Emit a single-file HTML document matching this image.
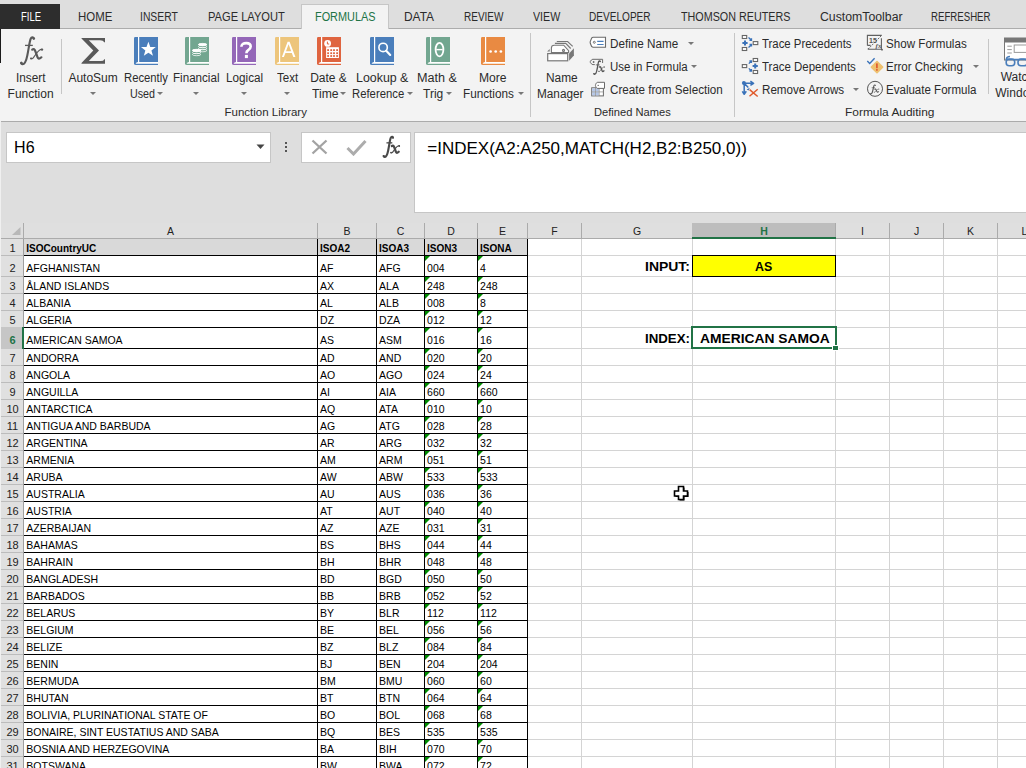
<!DOCTYPE html>
<html><head><meta charset="utf-8"><style>
html,body{margin:0;padding:0;}
body{width:1026px;height:768px;overflow:hidden;position:relative;background:#fff;font-family:'Liberation Sans', sans-serif;}
body > div{position:absolute;}
.t{white-space:pre;transform-origin:0 0;}
</style></head><body>
<div style="left:0px;top:0px;width:1026px;height:28px;background:#dedede;"></div>
<div style="left:0px;top:28px;width:1026px;height:1px;background:#acacac;"></div>
<div style="left:0px;top:29px;width:1026px;height:92px;background:#f3f3f3;"></div>
<div style="left:0px;top:121px;width:1026px;height:1px;background:#ababab;"></div>
<div style="left:0px;top:4px;width:1px;height:59px;background:#1a1a1a;"></div>
<div style="left:0px;top:4px;width:60px;height:25px;background:#2d2d2d;"></div>
<div style="left:301px;top:4px;width:88px;height:25px;background:#f3f3f3;box-sizing:border-box;border:1px solid #c6c6c6;border-bottom:none;"></div>
<div class="t" style="left:20.50px;top:10.64px;font:normal 12px 'Liberation Sans', sans-serif;line-height:12px;color:#ffffff;transform:scaleX(0.7931);">FILE</div>
<div class="t" style="left:77.50px;top:10.64px;font:normal 12px 'Liberation Sans', sans-serif;line-height:12px;color:#2b2b2b;transform:scaleX(0.9528);">HOME</div>
<div class="t" style="left:140.40px;top:10.64px;font:normal 12px 'Liberation Sans', sans-serif;line-height:12px;color:#2b2b2b;transform:scaleX(0.8631);">INSERT</div>
<div class="t" style="left:207.80px;top:10.64px;font:normal 12px 'Liberation Sans', sans-serif;line-height:12px;color:#2b2b2b;transform:scaleX(0.9262);">PAGE LAYOUT</div>
<div class="t" style="left:314.50px;top:10.64px;font:normal 12px 'Liberation Sans', sans-serif;line-height:12px;color:#217346;transform:scaleX(0.9072);">FORMULAS</div>
<div class="t" style="left:404.40px;top:10.64px;font:normal 12px 'Liberation Sans', sans-serif;line-height:12px;color:#2b2b2b;transform:scaleX(0.9922);">DATA</div>
<div class="t" style="left:464.10px;top:10.64px;font:normal 12px 'Liberation Sans', sans-serif;line-height:12px;color:#2b2b2b;transform:scaleX(0.8343);">REVIEW</div>
<div class="t" style="left:532.80px;top:10.64px;font:normal 12px 'Liberation Sans', sans-serif;line-height:12px;color:#2b2b2b;transform:scaleX(0.8901);">VIEW</div>
<div class="t" style="left:589.40px;top:10.64px;font:normal 12px 'Liberation Sans', sans-serif;line-height:12px;color:#2b2b2b;transform:scaleX(0.8397);">DEVELOPER</div>
<div class="t" style="left:680.60px;top:10.64px;font:normal 12px 'Liberation Sans', sans-serif;line-height:12px;color:#2b2b2b;transform:scaleX(0.8966);">THOMSON REUTERS</div>
<div class="t" style="left:819.60px;top:10.64px;font:normal 12px 'Liberation Sans', sans-serif;line-height:12px;color:#2b2b2b;transform:scaleX(1.0235);">CustomToolbar</div>
<div class="t" style="left:931.20px;top:10.64px;font:normal 12px 'Liberation Sans', sans-serif;line-height:12px;color:#2b2b2b;transform:scaleX(0.8039);">REFRESHER</div>
<div class="t" style="left:15.80px;top:71.84px;font:normal 12px 'Liberation Sans', sans-serif;line-height:12px;color:#2b2b2b;transform:scaleX(0.9828);">Insert</div>
<div class="t" style="left:7.60px;top:87.74px;font:normal 12px 'Liberation Sans', sans-serif;line-height:12px;color:#2b2b2b;">Function</div>
<div class="t" style="left:68.40px;top:71.84px;font:normal 12px 'Liberation Sans', sans-serif;line-height:12px;color:#2b2b2b;">AutoSum</div>
<div class="t" style="left:123.70px;top:71.84px;font:normal 12px 'Liberation Sans', sans-serif;line-height:12px;color:#2b2b2b;transform:scaleX(0.9403);">Recently</div>
<div class="t" style="left:129.50px;top:87.74px;font:normal 12px 'Liberation Sans', sans-serif;line-height:12px;color:#2b2b2b;transform:scaleX(0.8924);">Used</div>
<div class="t" style="left:173.20px;top:71.84px;font:normal 12px 'Liberation Sans', sans-serif;line-height:12px;color:#2b2b2b;transform:scaleX(0.9681);">Financial</div>
<div class="t" style="left:225.50px;top:71.84px;font:normal 12px 'Liberation Sans', sans-serif;line-height:12px;color:#2b2b2b;transform:scaleX(0.9755);">Logical</div>
<div class="t" style="left:276.60px;top:71.84px;font:normal 12px 'Liberation Sans', sans-serif;line-height:12px;color:#2b2b2b;transform:scaleX(0.9630);">Text</div>
<div class="t" style="left:310.20px;top:71.84px;font:normal 12px 'Liberation Sans', sans-serif;line-height:12px;color:#2b2b2b;">Date &amp;</div>
<div class="t" style="left:311.50px;top:87.74px;font:normal 12px 'Liberation Sans', sans-serif;line-height:12px;color:#2b2b2b;transform:scaleX(1.0139);">Time</div>
<div class="t" style="left:355.90px;top:71.84px;font:normal 12px 'Liberation Sans', sans-serif;line-height:12px;color:#2b2b2b;transform:scaleX(1.0331);">Lookup &amp;</div>
<div class="t" style="left:352.30px;top:87.74px;font:normal 12px 'Liberation Sans', sans-serif;line-height:12px;color:#2b2b2b;transform:scaleX(0.9427);">Reference</div>
<div class="t" style="left:417.40px;top:71.84px;font:normal 12px 'Liberation Sans', sans-serif;line-height:12px;color:#2b2b2b;transform:scaleX(1.0522);">Math &amp;</div>
<div class="t" style="left:423.00px;top:87.74px;font:normal 12px 'Liberation Sans', sans-serif;line-height:12px;color:#2b2b2b;">Trig</div>
<div class="t" style="left:479.40px;top:71.84px;font:normal 12px 'Liberation Sans', sans-serif;line-height:12px;color:#2b2b2b;transform:scaleX(1.0094);">More</div>
<div class="t" style="left:463.30px;top:87.74px;font:normal 12px 'Liberation Sans', sans-serif;line-height:12px;color:#2b2b2b;transform:scaleX(0.9783);">Functions</div>
<div class="t" style="left:545.60px;top:71.84px;font:normal 12px 'Liberation Sans', sans-serif;line-height:12px;color:#2b2b2b;transform:scaleX(0.9901);">Name</div>
<div class="t" style="left:537.40px;top:87.74px;font:normal 12px 'Liberation Sans', sans-serif;line-height:12px;color:#2b2b2b;transform:scaleX(0.9815);">Manager</div>
<div class="t" style="left:1000.70px;top:70.84px;font:normal 12px 'Liberation Sans', sans-serif;line-height:12px;color:#2b2b2b;">Watch</div>
<div class="t" style="left:995.30px;top:86.84px;font:normal 12px 'Liberation Sans', sans-serif;line-height:12px;color:#2b2b2b;">Window</div>
<div class="t" style="left:609.60px;top:37.64px;font:normal 12px 'Liberation Sans', sans-serif;line-height:12px;color:#2b2b2b;transform:scaleX(0.9739);">Define Name</div>
<div class="t" style="left:609.60px;top:60.54px;font:normal 12px 'Liberation Sans', sans-serif;line-height:12px;color:#2b2b2b;transform:scaleX(0.9550);">Use in Formula</div>
<div class="t" style="left:609.60px;top:83.54px;font:normal 12px 'Liberation Sans', sans-serif;line-height:12px;color:#2b2b2b;transform:scaleX(0.9719);">Create from Selection</div>
<div class="t" style="left:761.70px;top:37.64px;font:normal 12px 'Liberation Sans', sans-serif;line-height:12px;color:#2b2b2b;transform:scaleX(0.9494);">Trace Precedents</div>
<div class="t" style="left:761.70px;top:60.54px;font:normal 12px 'Liberation Sans', sans-serif;line-height:12px;color:#2b2b2b;transform:scaleX(0.9544);">Trace Dependents</div>
<div class="t" style="left:761.70px;top:83.54px;font:normal 12px 'Liberation Sans', sans-serif;line-height:12px;color:#2b2b2b;transform:scaleX(0.9693);">Remove Arrows</div>
<div class="t" style="left:886.30px;top:37.64px;font:normal 12px 'Liberation Sans', sans-serif;line-height:12px;color:#2b2b2b;transform:scaleX(0.9679);">Show Formulas</div>
<div class="t" style="left:886.30px;top:60.54px;font:normal 12px 'Liberation Sans', sans-serif;line-height:12px;color:#2b2b2b;transform:scaleX(0.9596);">Error Checking</div>
<div class="t" style="left:886.30px;top:83.54px;font:normal 12px 'Liberation Sans', sans-serif;line-height:12px;color:#2b2b2b;transform:scaleX(0.9612);">Evaluate Formula</div>
<div class="t" style="left:224.50px;top:107.17px;font:normal 11.5px 'Liberation Sans', sans-serif;line-height:11.5px;color:#2b2b2b;">Function Library</div>
<div class="t" style="left:593.70px;top:107.17px;font:normal 11.5px 'Liberation Sans', sans-serif;line-height:11.5px;color:#2b2b2b;transform:scaleX(0.9676);">Defined Names</div>
<div class="t" style="left:845.20px;top:107.17px;font:normal 11.5px 'Liberation Sans', sans-serif;line-height:11.5px;color:#2b2b2b;transform:scaleX(1.0371);">Formula Auditing</div>
<div style="left:61px;top:39px;width:1px;height:55px;background:#c6c6c6;"></div>
<div style="left:530px;top:33px;width:1px;height:84px;background:#c6c6c6;"></div>
<div style="left:734px;top:33px;width:1px;height:84px;background:#c6c6c6;"></div>
<div style="left:988px;top:39px;width:1px;height:55px;background:#c6c6c6;"></div>
<svg style="position:absolute;left:90.4px;top:92px;" width="6" height="4" viewBox="0 0 6 4"><path d="M0 0 L6 0 L3 3 Z" fill="#777"/></svg>
<svg style="position:absolute;left:193px;top:92px;" width="6" height="4" viewBox="0 0 6 4"><path d="M0 0 L6 0 L3 3 Z" fill="#777"/></svg>
<svg style="position:absolute;left:241.2px;top:92px;" width="6" height="4" viewBox="0 0 6 4"><path d="M0 0 L6 0 L3 3 Z" fill="#777"/></svg>
<svg style="position:absolute;left:284px;top:92px;" width="6" height="4" viewBox="0 0 6 4"><path d="M0 0 L6 0 L3 3 Z" fill="#777"/></svg>
<svg style="position:absolute;left:157px;top:92px;" width="6" height="4" viewBox="0 0 6 4"><path d="M0 0 L6 0 L3 3 Z" fill="#777"/></svg>
<svg style="position:absolute;left:340px;top:92px;" width="6" height="4" viewBox="0 0 6 4"><path d="M0 0 L6 0 L3 3 Z" fill="#777"/></svg>
<svg style="position:absolute;left:406.6px;top:92px;" width="6" height="4" viewBox="0 0 6 4"><path d="M0 0 L6 0 L3 3 Z" fill="#777"/></svg>
<svg style="position:absolute;left:446.1px;top:92px;" width="6" height="4" viewBox="0 0 6 4"><path d="M0 0 L6 0 L3 3 Z" fill="#777"/></svg>
<svg style="position:absolute;left:517.7px;top:92px;" width="6" height="4" viewBox="0 0 6 4"><path d="M0 0 L6 0 L3 3 Z" fill="#777"/></svg>
<svg style="position:absolute;left:687.5px;top:42px;" width="6" height="4" viewBox="0 0 6 4"><path d="M0 0 L6 0 L3 3 Z" fill="#777"/></svg>
<svg style="position:absolute;left:690.5px;top:65px;" width="6" height="4" viewBox="0 0 6 4"><path d="M0 0 L6 0 L3 3 Z" fill="#777"/></svg>
<svg style="position:absolute;left:853.4px;top:88px;" width="6" height="4" viewBox="0 0 6 4"><path d="M0 0 L6 0 L3 3 Z" fill="#777"/></svg>
<svg style="position:absolute;left:973.3px;top:65px;" width="6" height="4" viewBox="0 0 6 4"><path d="M0 0 L6 0 L3 3 Z" fill="#777"/></svg>
<div style="left:0px;top:122px;width:1026px;height:101px;background:#dedede;"></div>
<div style="left:0px;top:121px;width:1px;height:647px;background:#f0f0f0;"></div>
<div style="left:6px;top:132px;width:265px;height:31px;background:#ffffff;box-sizing:border-box;border:1px solid #c6c6c6;"></div>
<div style="left:301px;top:132px;width:110px;height:31px;background:#ffffff;box-sizing:border-box;border:1px solid #c6c6c6;"></div>
<div style="left:414px;top:132px;width:612px;height:81px;background:#ffffff;box-sizing:border-box;border:1px solid #c6c6c6;border-right:none;"></div>
<div class="t" style="left:14.10px;top:140.46px;font:normal 16px 'Liberation Sans', sans-serif;line-height:16px;color:#000;">H6</div>
<div class="t" style="left:427.30px;top:139.61px;font:normal 17px 'Liberation Sans', sans-serif;line-height:17px;color:#000;">=INDEX(A2:A250,MATCH(H2,B2:B250,0))</div>
<svg style="position:absolute;left:256px;top:144px;" width="9" height="6" viewBox="0 0 9 6"><path d="M0.5 0.5 L8.5 0.5 L4.5 5 Z" fill="#444"/></svg>
<div style="left:285px;top:142px;width:2px;height:2px;background:#555;"></div>
<div style="left:285px;top:146px;width:2px;height:2px;background:#555;"></div>
<div style="left:285px;top:150px;width:2px;height:2px;background:#555;"></div>
<div style="left:1px;top:223px;width:1025px;height:15px;background:#dfdfdf;"></div>
<div style="left:1px;top:238px;width:1025px;height:1px;background:#ababab;"></div>
<div style="left:23px;top:223px;width:1px;height:15px;background:#ababab;"></div>
<div style="left:317px;top:223px;width:1px;height:15px;background:#ababab;"></div>
<div style="left:376px;top:223px;width:1px;height:15px;background:#ababab;"></div>
<div style="left:424px;top:223px;width:1px;height:15px;background:#ababab;"></div>
<div style="left:477px;top:223px;width:1px;height:15px;background:#ababab;"></div>
<div style="left:527px;top:223px;width:1px;height:15px;background:#ababab;"></div>
<div style="left:581px;top:223px;width:1px;height:15px;background:#ababab;"></div>
<div style="left:692px;top:223px;width:1px;height:15px;background:#ababab;"></div>
<div style="left:835px;top:223px;width:1px;height:15px;background:#ababab;"></div>
<div style="left:889px;top:223px;width:1px;height:15px;background:#ababab;"></div>
<div style="left:943px;top:223px;width:1px;height:15px;background:#ababab;"></div>
<div style="left:997px;top:223px;width:1px;height:15px;background:#ababab;"></div>
<div style="left:692px;top:223px;width:143px;height:14px;background:#bdbdbd;"></div>
<div style="left:692px;top:237px;width:144px;height:2px;background:#217346;"></div>
<svg style="position:absolute;left:12px;top:227px;" width="9" height="8" viewBox="0 0 9 8"><path d="M8.5 0 L8.5 8 L0 8 Z" fill="#b8b8b8"/></svg>
<div style="left:1px;top:239px;width:22px;height:529px;background:#e0e0e0;"></div>
<div style="left:23px;top:239px;width:1px;height:529px;background:#9f9f9f;"></div>
<div style="left:24px;top:239px;width:503px;height:16px;background:#d9d9d9;"></div>
<div style="left:692px;top:255px;width:144px;height:22px;background:#ffff00;box-sizing:border-box;border:1px solid #000;"></div>
<div style="left:527px;top:239px;width:1px;height:529px;background:#d4d4d4;"></div>
<div style="left:581px;top:239px;width:1px;height:529px;background:#d4d4d4;"></div>
<div style="left:692px;top:239px;width:1px;height:529px;background:#d4d4d4;"></div>
<div style="left:835px;top:239px;width:1px;height:529px;background:#d4d4d4;"></div>
<div style="left:889px;top:239px;width:1px;height:529px;background:#d4d4d4;"></div>
<div style="left:943px;top:239px;width:1px;height:529px;background:#d4d4d4;"></div>
<div style="left:997px;top:239px;width:1px;height:529px;background:#d4d4d4;"></div>
<div style="left:528px;top:255px;width:498px;height:1px;background:#d4d4d4;"></div>
<div style="left:1px;top:255px;width:22px;height:1px;background:#bcbcbc;"></div>
<div style="left:528px;top:276px;width:498px;height:1px;background:#d4d4d4;"></div>
<div style="left:1px;top:276px;width:22px;height:1px;background:#bcbcbc;"></div>
<div style="left:528px;top:293px;width:498px;height:1px;background:#d4d4d4;"></div>
<div style="left:1px;top:293px;width:22px;height:1px;background:#bcbcbc;"></div>
<div style="left:528px;top:310px;width:498px;height:1px;background:#d4d4d4;"></div>
<div style="left:1px;top:310px;width:22px;height:1px;background:#bcbcbc;"></div>
<div style="left:528px;top:327px;width:498px;height:1px;background:#d4d4d4;"></div>
<div style="left:1px;top:327px;width:22px;height:1px;background:#bcbcbc;"></div>
<div style="left:528px;top:348px;width:498px;height:1px;background:#d4d4d4;"></div>
<div style="left:1px;top:348px;width:22px;height:1px;background:#bcbcbc;"></div>
<div style="left:528px;top:365px;width:498px;height:1px;background:#d4d4d4;"></div>
<div style="left:1px;top:365px;width:22px;height:1px;background:#bcbcbc;"></div>
<div style="left:528px;top:382px;width:498px;height:1px;background:#d4d4d4;"></div>
<div style="left:1px;top:382px;width:22px;height:1px;background:#bcbcbc;"></div>
<div style="left:528px;top:399px;width:498px;height:1px;background:#d4d4d4;"></div>
<div style="left:1px;top:399px;width:22px;height:1px;background:#bcbcbc;"></div>
<div style="left:528px;top:416px;width:498px;height:1px;background:#d4d4d4;"></div>
<div style="left:1px;top:416px;width:22px;height:1px;background:#bcbcbc;"></div>
<div style="left:528px;top:433px;width:498px;height:1px;background:#d4d4d4;"></div>
<div style="left:1px;top:433px;width:22px;height:1px;background:#bcbcbc;"></div>
<div style="left:528px;top:450px;width:498px;height:1px;background:#d4d4d4;"></div>
<div style="left:1px;top:450px;width:22px;height:1px;background:#bcbcbc;"></div>
<div style="left:528px;top:467px;width:498px;height:1px;background:#d4d4d4;"></div>
<div style="left:1px;top:467px;width:22px;height:1px;background:#bcbcbc;"></div>
<div style="left:528px;top:484px;width:498px;height:1px;background:#d4d4d4;"></div>
<div style="left:1px;top:484px;width:22px;height:1px;background:#bcbcbc;"></div>
<div style="left:528px;top:501px;width:498px;height:1px;background:#d4d4d4;"></div>
<div style="left:1px;top:501px;width:22px;height:1px;background:#bcbcbc;"></div>
<div style="left:528px;top:518px;width:498px;height:1px;background:#d4d4d4;"></div>
<div style="left:1px;top:518px;width:22px;height:1px;background:#bcbcbc;"></div>
<div style="left:528px;top:535px;width:498px;height:1px;background:#d4d4d4;"></div>
<div style="left:1px;top:535px;width:22px;height:1px;background:#bcbcbc;"></div>
<div style="left:528px;top:552px;width:498px;height:1px;background:#d4d4d4;"></div>
<div style="left:1px;top:552px;width:22px;height:1px;background:#bcbcbc;"></div>
<div style="left:528px;top:569px;width:498px;height:1px;background:#d4d4d4;"></div>
<div style="left:1px;top:569px;width:22px;height:1px;background:#bcbcbc;"></div>
<div style="left:528px;top:586px;width:498px;height:1px;background:#d4d4d4;"></div>
<div style="left:1px;top:586px;width:22px;height:1px;background:#bcbcbc;"></div>
<div style="left:528px;top:603px;width:498px;height:1px;background:#d4d4d4;"></div>
<div style="left:1px;top:603px;width:22px;height:1px;background:#bcbcbc;"></div>
<div style="left:528px;top:620px;width:498px;height:1px;background:#d4d4d4;"></div>
<div style="left:1px;top:620px;width:22px;height:1px;background:#bcbcbc;"></div>
<div style="left:528px;top:637px;width:498px;height:1px;background:#d4d4d4;"></div>
<div style="left:1px;top:637px;width:22px;height:1px;background:#bcbcbc;"></div>
<div style="left:528px;top:654px;width:498px;height:1px;background:#d4d4d4;"></div>
<div style="left:1px;top:654px;width:22px;height:1px;background:#bcbcbc;"></div>
<div style="left:528px;top:671px;width:498px;height:1px;background:#d4d4d4;"></div>
<div style="left:1px;top:671px;width:22px;height:1px;background:#bcbcbc;"></div>
<div style="left:528px;top:688px;width:498px;height:1px;background:#d4d4d4;"></div>
<div style="left:1px;top:688px;width:22px;height:1px;background:#bcbcbc;"></div>
<div style="left:528px;top:705px;width:498px;height:1px;background:#d4d4d4;"></div>
<div style="left:1px;top:705px;width:22px;height:1px;background:#bcbcbc;"></div>
<div style="left:528px;top:722px;width:498px;height:1px;background:#d4d4d4;"></div>
<div style="left:1px;top:722px;width:22px;height:1px;background:#bcbcbc;"></div>
<div style="left:528px;top:739px;width:498px;height:1px;background:#d4d4d4;"></div>
<div style="left:1px;top:739px;width:22px;height:1px;background:#bcbcbc;"></div>
<div style="left:528px;top:756px;width:498px;height:1px;background:#d4d4d4;"></div>
<div style="left:1px;top:756px;width:22px;height:1px;background:#bcbcbc;"></div>
<div style="left:528px;top:773px;width:498px;height:1px;background:#d4d4d4;"></div>
<div style="left:1px;top:773px;width:22px;height:1px;background:#bcbcbc;"></div>
<div style="left:1px;top:327px;width:21px;height:22px;background:#c6c6c6;"></div>
<div style="left:22px;top:327px;width:2px;height:22px;background:#217346;"></div>
<div style="left:317px;top:239px;width:1px;height:529px;background:#000;"></div>
<div style="left:376px;top:239px;width:1px;height:529px;background:#000;"></div>
<div style="left:424px;top:239px;width:1px;height:529px;background:#000;"></div>
<div style="left:477px;top:239px;width:1px;height:529px;background:#000;"></div>
<div style="left:527px;top:239px;width:1px;height:529px;background:#000;"></div>
<div style="left:24px;top:255px;width:504px;height:1px;background:#000;"></div>
<div style="left:24px;top:276px;width:504px;height:1px;background:#000;"></div>
<div style="left:24px;top:293px;width:504px;height:1px;background:#000;"></div>
<div style="left:24px;top:310px;width:504px;height:1px;background:#000;"></div>
<div style="left:24px;top:327px;width:504px;height:1px;background:#000;"></div>
<div style="left:24px;top:348px;width:504px;height:1px;background:#000;"></div>
<div style="left:24px;top:365px;width:504px;height:1px;background:#000;"></div>
<div style="left:24px;top:382px;width:504px;height:1px;background:#000;"></div>
<div style="left:24px;top:399px;width:504px;height:1px;background:#000;"></div>
<div style="left:24px;top:416px;width:504px;height:1px;background:#000;"></div>
<div style="left:24px;top:433px;width:504px;height:1px;background:#000;"></div>
<div style="left:24px;top:450px;width:504px;height:1px;background:#000;"></div>
<div style="left:24px;top:467px;width:504px;height:1px;background:#000;"></div>
<div style="left:24px;top:484px;width:504px;height:1px;background:#000;"></div>
<div style="left:24px;top:501px;width:504px;height:1px;background:#000;"></div>
<div style="left:24px;top:518px;width:504px;height:1px;background:#000;"></div>
<div style="left:24px;top:535px;width:504px;height:1px;background:#000;"></div>
<div style="left:24px;top:552px;width:504px;height:1px;background:#000;"></div>
<div style="left:24px;top:569px;width:504px;height:1px;background:#000;"></div>
<div style="left:24px;top:586px;width:504px;height:1px;background:#000;"></div>
<div style="left:24px;top:603px;width:504px;height:1px;background:#000;"></div>
<div style="left:24px;top:620px;width:504px;height:1px;background:#000;"></div>
<div style="left:24px;top:637px;width:504px;height:1px;background:#000;"></div>
<div style="left:24px;top:654px;width:504px;height:1px;background:#000;"></div>
<div style="left:24px;top:671px;width:504px;height:1px;background:#000;"></div>
<div style="left:24px;top:688px;width:504px;height:1px;background:#000;"></div>
<div style="left:24px;top:705px;width:504px;height:1px;background:#000;"></div>
<div style="left:24px;top:722px;width:504px;height:1px;background:#000;"></div>
<div style="left:24px;top:739px;width:504px;height:1px;background:#000;"></div>
<div style="left:24px;top:756px;width:504px;height:1px;background:#000;"></div>
<div style="left:24px;top:773px;width:504px;height:1px;background:#000;"></div>
<div style="left:692px;top:255px;width:144px;height:1px;background:#000;"></div>
<div style="left:692px;top:276px;width:144px;height:1px;background:#000;"></div>
<div style="left:692px;top:255px;width:1px;height:22px;background:#000;"></div>
<div style="left:835px;top:255px;width:1px;height:22px;background:#000;"></div>
<div class="t" style="left:9.44px;top:242.69px;font:normal 11px 'Liberation Sans', sans-serif;line-height:11px;color:#222;">1</div>
<div class="t" style="left:26.30px;top:243.53px;font:bold 10px 'Liberation Sans', sans-serif;line-height:10px;color:#000;">ISOCountryUC</div>
<div class="t" style="left:320.10px;top:243.53px;font:bold 10px 'Liberation Sans', sans-serif;line-height:10px;color:#000;">ISOA2</div>
<div class="t" style="left:379.10px;top:243.53px;font:bold 10px 'Liberation Sans', sans-serif;line-height:10px;color:#000;">ISOA3</div>
<div class="t" style="left:427.10px;top:243.53px;font:bold 10px 'Liberation Sans', sans-serif;line-height:10px;color:#000;">ISON3</div>
<div class="t" style="left:480.10px;top:243.53px;font:bold 10px 'Liberation Sans', sans-serif;line-height:10px;color:#000;">ISONA</div>
<div class="t" style="left:9.44px;top:262.69px;font:normal 11px 'Liberation Sans', sans-serif;line-height:11px;color:#222;">2</div>
<div class="t" style="left:26.30px;top:263.11px;font:normal 10.5px 'Liberation Sans', sans-serif;line-height:10.5px;color:#000;">AFGHANISTAN</div>
<div class="t" style="left:320.10px;top:263.11px;font:normal 10.5px 'Liberation Sans', sans-serif;line-height:10.5px;color:#000;">AF</div>
<div class="t" style="left:379.10px;top:263.11px;font:normal 10.5px 'Liberation Sans', sans-serif;line-height:10.5px;color:#000;">AFG</div>
<div class="t" style="left:427.10px;top:263.11px;font:normal 10.5px 'Liberation Sans', sans-serif;line-height:10.5px;color:#000;">004</div>
<div class="t" style="left:480.10px;top:263.11px;font:normal 10.5px 'Liberation Sans', sans-serif;line-height:10.5px;color:#000;">4</div>
<svg style="position:absolute;left:425px;top:256px;" width="5" height="5" viewBox="0 0 5 5"><path d="M0 0 L5 0 L0 5 Z" fill="#008a00"/></svg>
<svg style="position:absolute;left:478px;top:256px;" width="5" height="5" viewBox="0 0 5 5"><path d="M0 0 L5 0 L0 5 Z" fill="#008a00"/></svg>
<div class="t" style="left:9.44px;top:280.69px;font:normal 11px 'Liberation Sans', sans-serif;line-height:11px;color:#222;">3</div>
<div class="t" style="left:26.30px;top:281.11px;font:normal 10.5px 'Liberation Sans', sans-serif;line-height:10.5px;color:#000;">ÅLAND ISLANDS</div>
<div class="t" style="left:320.10px;top:281.11px;font:normal 10.5px 'Liberation Sans', sans-serif;line-height:10.5px;color:#000;">AX</div>
<div class="t" style="left:379.10px;top:281.11px;font:normal 10.5px 'Liberation Sans', sans-serif;line-height:10.5px;color:#000;">ALA</div>
<div class="t" style="left:427.10px;top:281.11px;font:normal 10.5px 'Liberation Sans', sans-serif;line-height:10.5px;color:#000;">248</div>
<div class="t" style="left:480.10px;top:281.11px;font:normal 10.5px 'Liberation Sans', sans-serif;line-height:10.5px;color:#000;">248</div>
<svg style="position:absolute;left:425px;top:277px;" width="5" height="5" viewBox="0 0 5 5"><path d="M0 0 L5 0 L0 5 Z" fill="#008a00"/></svg>
<svg style="position:absolute;left:478px;top:277px;" width="5" height="5" viewBox="0 0 5 5"><path d="M0 0 L5 0 L0 5 Z" fill="#008a00"/></svg>
<div class="t" style="left:9.44px;top:297.69px;font:normal 11px 'Liberation Sans', sans-serif;line-height:11px;color:#222;">4</div>
<div class="t" style="left:26.30px;top:298.11px;font:normal 10.5px 'Liberation Sans', sans-serif;line-height:10.5px;color:#000;">ALBANIA</div>
<div class="t" style="left:320.10px;top:298.11px;font:normal 10.5px 'Liberation Sans', sans-serif;line-height:10.5px;color:#000;">AL</div>
<div class="t" style="left:379.10px;top:298.11px;font:normal 10.5px 'Liberation Sans', sans-serif;line-height:10.5px;color:#000;">ALB</div>
<div class="t" style="left:427.10px;top:298.11px;font:normal 10.5px 'Liberation Sans', sans-serif;line-height:10.5px;color:#000;">008</div>
<div class="t" style="left:480.10px;top:298.11px;font:normal 10.5px 'Liberation Sans', sans-serif;line-height:10.5px;color:#000;">8</div>
<svg style="position:absolute;left:425px;top:294px;" width="5" height="5" viewBox="0 0 5 5"><path d="M0 0 L5 0 L0 5 Z" fill="#008a00"/></svg>
<svg style="position:absolute;left:478px;top:294px;" width="5" height="5" viewBox="0 0 5 5"><path d="M0 0 L5 0 L0 5 Z" fill="#008a00"/></svg>
<div class="t" style="left:9.44px;top:314.69px;font:normal 11px 'Liberation Sans', sans-serif;line-height:11px;color:#222;">5</div>
<div class="t" style="left:26.30px;top:315.11px;font:normal 10.5px 'Liberation Sans', sans-serif;line-height:10.5px;color:#000;">ALGERIA</div>
<div class="t" style="left:320.10px;top:315.11px;font:normal 10.5px 'Liberation Sans', sans-serif;line-height:10.5px;color:#000;">DZ</div>
<div class="t" style="left:379.10px;top:315.11px;font:normal 10.5px 'Liberation Sans', sans-serif;line-height:10.5px;color:#000;">DZA</div>
<div class="t" style="left:427.10px;top:315.11px;font:normal 10.5px 'Liberation Sans', sans-serif;line-height:10.5px;color:#000;">012</div>
<div class="t" style="left:480.10px;top:315.11px;font:normal 10.5px 'Liberation Sans', sans-serif;line-height:10.5px;color:#000;">12</div>
<svg style="position:absolute;left:425px;top:311px;" width="5" height="5" viewBox="0 0 5 5"><path d="M0 0 L5 0 L0 5 Z" fill="#008a00"/></svg>
<svg style="position:absolute;left:478px;top:311px;" width="5" height="5" viewBox="0 0 5 5"><path d="M0 0 L5 0 L0 5 Z" fill="#008a00"/></svg>
<div class="t" style="left:9.44px;top:334.69px;font:bold 11px 'Liberation Sans', sans-serif;line-height:11px;color:#217346;">6</div>
<div class="t" style="left:26.30px;top:335.11px;font:normal 10.5px 'Liberation Sans', sans-serif;line-height:10.5px;color:#000;">AMERICAN SAMOA</div>
<div class="t" style="left:320.10px;top:335.11px;font:normal 10.5px 'Liberation Sans', sans-serif;line-height:10.5px;color:#000;">AS</div>
<div class="t" style="left:379.10px;top:335.11px;font:normal 10.5px 'Liberation Sans', sans-serif;line-height:10.5px;color:#000;">ASM</div>
<div class="t" style="left:427.10px;top:335.11px;font:normal 10.5px 'Liberation Sans', sans-serif;line-height:10.5px;color:#000;">016</div>
<div class="t" style="left:480.10px;top:335.11px;font:normal 10.5px 'Liberation Sans', sans-serif;line-height:10.5px;color:#000;">16</div>
<svg style="position:absolute;left:425px;top:328px;" width="5" height="5" viewBox="0 0 5 5"><path d="M0 0 L5 0 L0 5 Z" fill="#008a00"/></svg>
<svg style="position:absolute;left:478px;top:328px;" width="5" height="5" viewBox="0 0 5 5"><path d="M0 0 L5 0 L0 5 Z" fill="#008a00"/></svg>
<div class="t" style="left:9.44px;top:352.69px;font:normal 11px 'Liberation Sans', sans-serif;line-height:11px;color:#222;">7</div>
<div class="t" style="left:26.30px;top:353.11px;font:normal 10.5px 'Liberation Sans', sans-serif;line-height:10.5px;color:#000;">ANDORRA</div>
<div class="t" style="left:320.10px;top:353.11px;font:normal 10.5px 'Liberation Sans', sans-serif;line-height:10.5px;color:#000;">AD</div>
<div class="t" style="left:379.10px;top:353.11px;font:normal 10.5px 'Liberation Sans', sans-serif;line-height:10.5px;color:#000;">AND</div>
<div class="t" style="left:427.10px;top:353.11px;font:normal 10.5px 'Liberation Sans', sans-serif;line-height:10.5px;color:#000;">020</div>
<div class="t" style="left:480.10px;top:353.11px;font:normal 10.5px 'Liberation Sans', sans-serif;line-height:10.5px;color:#000;">20</div>
<svg style="position:absolute;left:425px;top:349px;" width="5" height="5" viewBox="0 0 5 5"><path d="M0 0 L5 0 L0 5 Z" fill="#008a00"/></svg>
<svg style="position:absolute;left:478px;top:349px;" width="5" height="5" viewBox="0 0 5 5"><path d="M0 0 L5 0 L0 5 Z" fill="#008a00"/></svg>
<div class="t" style="left:9.44px;top:369.69px;font:normal 11px 'Liberation Sans', sans-serif;line-height:11px;color:#222;">8</div>
<div class="t" style="left:26.30px;top:370.11px;font:normal 10.5px 'Liberation Sans', sans-serif;line-height:10.5px;color:#000;">ANGOLA</div>
<div class="t" style="left:320.10px;top:370.11px;font:normal 10.5px 'Liberation Sans', sans-serif;line-height:10.5px;color:#000;">AO</div>
<div class="t" style="left:379.10px;top:370.11px;font:normal 10.5px 'Liberation Sans', sans-serif;line-height:10.5px;color:#000;">AGO</div>
<div class="t" style="left:427.10px;top:370.11px;font:normal 10.5px 'Liberation Sans', sans-serif;line-height:10.5px;color:#000;">024</div>
<div class="t" style="left:480.10px;top:370.11px;font:normal 10.5px 'Liberation Sans', sans-serif;line-height:10.5px;color:#000;">24</div>
<svg style="position:absolute;left:425px;top:366px;" width="5" height="5" viewBox="0 0 5 5"><path d="M0 0 L5 0 L0 5 Z" fill="#008a00"/></svg>
<svg style="position:absolute;left:478px;top:366px;" width="5" height="5" viewBox="0 0 5 5"><path d="M0 0 L5 0 L0 5 Z" fill="#008a00"/></svg>
<div class="t" style="left:9.44px;top:386.69px;font:normal 11px 'Liberation Sans', sans-serif;line-height:11px;color:#222;">9</div>
<div class="t" style="left:26.30px;top:387.11px;font:normal 10.5px 'Liberation Sans', sans-serif;line-height:10.5px;color:#000;">ANGUILLA</div>
<div class="t" style="left:320.10px;top:387.11px;font:normal 10.5px 'Liberation Sans', sans-serif;line-height:10.5px;color:#000;">AI</div>
<div class="t" style="left:379.10px;top:387.11px;font:normal 10.5px 'Liberation Sans', sans-serif;line-height:10.5px;color:#000;">AIA</div>
<div class="t" style="left:427.10px;top:387.11px;font:normal 10.5px 'Liberation Sans', sans-serif;line-height:10.5px;color:#000;">660</div>
<div class="t" style="left:480.10px;top:387.11px;font:normal 10.5px 'Liberation Sans', sans-serif;line-height:10.5px;color:#000;">660</div>
<svg style="position:absolute;left:425px;top:383px;" width="5" height="5" viewBox="0 0 5 5"><path d="M0 0 L5 0 L0 5 Z" fill="#008a00"/></svg>
<svg style="position:absolute;left:478px;top:383px;" width="5" height="5" viewBox="0 0 5 5"><path d="M0 0 L5 0 L0 5 Z" fill="#008a00"/></svg>
<div class="t" style="left:6.38px;top:403.69px;font:normal 11px 'Liberation Sans', sans-serif;line-height:11px;color:#222;">10</div>
<div class="t" style="left:26.30px;top:404.11px;font:normal 10.5px 'Liberation Sans', sans-serif;line-height:10.5px;color:#000;">ANTARCTICA</div>
<div class="t" style="left:320.10px;top:404.11px;font:normal 10.5px 'Liberation Sans', sans-serif;line-height:10.5px;color:#000;">AQ</div>
<div class="t" style="left:379.10px;top:404.11px;font:normal 10.5px 'Liberation Sans', sans-serif;line-height:10.5px;color:#000;">ATA</div>
<div class="t" style="left:427.10px;top:404.11px;font:normal 10.5px 'Liberation Sans', sans-serif;line-height:10.5px;color:#000;">010</div>
<div class="t" style="left:480.10px;top:404.11px;font:normal 10.5px 'Liberation Sans', sans-serif;line-height:10.5px;color:#000;">10</div>
<svg style="position:absolute;left:425px;top:400px;" width="5" height="5" viewBox="0 0 5 5"><path d="M0 0 L5 0 L0 5 Z" fill="#008a00"/></svg>
<svg style="position:absolute;left:478px;top:400px;" width="5" height="5" viewBox="0 0 5 5"><path d="M0 0 L5 0 L0 5 Z" fill="#008a00"/></svg>
<div class="t" style="left:6.79px;top:420.69px;font:normal 11px 'Liberation Sans', sans-serif;line-height:11px;color:#222;">11</div>
<div class="t" style="left:26.30px;top:421.11px;font:normal 10.5px 'Liberation Sans', sans-serif;line-height:10.5px;color:#000;">ANTIGUA AND BARBUDA</div>
<div class="t" style="left:320.10px;top:421.11px;font:normal 10.5px 'Liberation Sans', sans-serif;line-height:10.5px;color:#000;">AG</div>
<div class="t" style="left:379.10px;top:421.11px;font:normal 10.5px 'Liberation Sans', sans-serif;line-height:10.5px;color:#000;">ATG</div>
<div class="t" style="left:427.10px;top:421.11px;font:normal 10.5px 'Liberation Sans', sans-serif;line-height:10.5px;color:#000;">028</div>
<div class="t" style="left:480.10px;top:421.11px;font:normal 10.5px 'Liberation Sans', sans-serif;line-height:10.5px;color:#000;">28</div>
<svg style="position:absolute;left:425px;top:417px;" width="5" height="5" viewBox="0 0 5 5"><path d="M0 0 L5 0 L0 5 Z" fill="#008a00"/></svg>
<svg style="position:absolute;left:478px;top:417px;" width="5" height="5" viewBox="0 0 5 5"><path d="M0 0 L5 0 L0 5 Z" fill="#008a00"/></svg>
<div class="t" style="left:6.38px;top:437.69px;font:normal 11px 'Liberation Sans', sans-serif;line-height:11px;color:#222;">12</div>
<div class="t" style="left:26.30px;top:438.11px;font:normal 10.5px 'Liberation Sans', sans-serif;line-height:10.5px;color:#000;">ARGENTINA</div>
<div class="t" style="left:320.10px;top:438.11px;font:normal 10.5px 'Liberation Sans', sans-serif;line-height:10.5px;color:#000;">AR</div>
<div class="t" style="left:379.10px;top:438.11px;font:normal 10.5px 'Liberation Sans', sans-serif;line-height:10.5px;color:#000;">ARG</div>
<div class="t" style="left:427.10px;top:438.11px;font:normal 10.5px 'Liberation Sans', sans-serif;line-height:10.5px;color:#000;">032</div>
<div class="t" style="left:480.10px;top:438.11px;font:normal 10.5px 'Liberation Sans', sans-serif;line-height:10.5px;color:#000;">32</div>
<svg style="position:absolute;left:425px;top:434px;" width="5" height="5" viewBox="0 0 5 5"><path d="M0 0 L5 0 L0 5 Z" fill="#008a00"/></svg>
<svg style="position:absolute;left:478px;top:434px;" width="5" height="5" viewBox="0 0 5 5"><path d="M0 0 L5 0 L0 5 Z" fill="#008a00"/></svg>
<div class="t" style="left:6.38px;top:454.69px;font:normal 11px 'Liberation Sans', sans-serif;line-height:11px;color:#222;">13</div>
<div class="t" style="left:26.30px;top:455.11px;font:normal 10.5px 'Liberation Sans', sans-serif;line-height:10.5px;color:#000;">ARMENIA</div>
<div class="t" style="left:320.10px;top:455.11px;font:normal 10.5px 'Liberation Sans', sans-serif;line-height:10.5px;color:#000;">AM</div>
<div class="t" style="left:379.10px;top:455.11px;font:normal 10.5px 'Liberation Sans', sans-serif;line-height:10.5px;color:#000;">ARM</div>
<div class="t" style="left:427.10px;top:455.11px;font:normal 10.5px 'Liberation Sans', sans-serif;line-height:10.5px;color:#000;">051</div>
<div class="t" style="left:480.10px;top:455.11px;font:normal 10.5px 'Liberation Sans', sans-serif;line-height:10.5px;color:#000;">51</div>
<svg style="position:absolute;left:425px;top:451px;" width="5" height="5" viewBox="0 0 5 5"><path d="M0 0 L5 0 L0 5 Z" fill="#008a00"/></svg>
<svg style="position:absolute;left:478px;top:451px;" width="5" height="5" viewBox="0 0 5 5"><path d="M0 0 L5 0 L0 5 Z" fill="#008a00"/></svg>
<div class="t" style="left:6.38px;top:471.69px;font:normal 11px 'Liberation Sans', sans-serif;line-height:11px;color:#222;">14</div>
<div class="t" style="left:26.30px;top:472.11px;font:normal 10.5px 'Liberation Sans', sans-serif;line-height:10.5px;color:#000;">ARUBA</div>
<div class="t" style="left:320.10px;top:472.11px;font:normal 10.5px 'Liberation Sans', sans-serif;line-height:10.5px;color:#000;">AW</div>
<div class="t" style="left:379.10px;top:472.11px;font:normal 10.5px 'Liberation Sans', sans-serif;line-height:10.5px;color:#000;">ABW</div>
<div class="t" style="left:427.10px;top:472.11px;font:normal 10.5px 'Liberation Sans', sans-serif;line-height:10.5px;color:#000;">533</div>
<div class="t" style="left:480.10px;top:472.11px;font:normal 10.5px 'Liberation Sans', sans-serif;line-height:10.5px;color:#000;">533</div>
<svg style="position:absolute;left:425px;top:468px;" width="5" height="5" viewBox="0 0 5 5"><path d="M0 0 L5 0 L0 5 Z" fill="#008a00"/></svg>
<svg style="position:absolute;left:478px;top:468px;" width="5" height="5" viewBox="0 0 5 5"><path d="M0 0 L5 0 L0 5 Z" fill="#008a00"/></svg>
<div class="t" style="left:6.38px;top:488.69px;font:normal 11px 'Liberation Sans', sans-serif;line-height:11px;color:#222;">15</div>
<div class="t" style="left:26.30px;top:489.11px;font:normal 10.5px 'Liberation Sans', sans-serif;line-height:10.5px;color:#000;">AUSTRALIA</div>
<div class="t" style="left:320.10px;top:489.11px;font:normal 10.5px 'Liberation Sans', sans-serif;line-height:10.5px;color:#000;">AU</div>
<div class="t" style="left:379.10px;top:489.11px;font:normal 10.5px 'Liberation Sans', sans-serif;line-height:10.5px;color:#000;">AUS</div>
<div class="t" style="left:427.10px;top:489.11px;font:normal 10.5px 'Liberation Sans', sans-serif;line-height:10.5px;color:#000;">036</div>
<div class="t" style="left:480.10px;top:489.11px;font:normal 10.5px 'Liberation Sans', sans-serif;line-height:10.5px;color:#000;">36</div>
<svg style="position:absolute;left:425px;top:485px;" width="5" height="5" viewBox="0 0 5 5"><path d="M0 0 L5 0 L0 5 Z" fill="#008a00"/></svg>
<svg style="position:absolute;left:478px;top:485px;" width="5" height="5" viewBox="0 0 5 5"><path d="M0 0 L5 0 L0 5 Z" fill="#008a00"/></svg>
<div class="t" style="left:6.38px;top:505.69px;font:normal 11px 'Liberation Sans', sans-serif;line-height:11px;color:#222;">16</div>
<div class="t" style="left:26.30px;top:506.11px;font:normal 10.5px 'Liberation Sans', sans-serif;line-height:10.5px;color:#000;">AUSTRIA</div>
<div class="t" style="left:320.10px;top:506.11px;font:normal 10.5px 'Liberation Sans', sans-serif;line-height:10.5px;color:#000;">AT</div>
<div class="t" style="left:379.10px;top:506.11px;font:normal 10.5px 'Liberation Sans', sans-serif;line-height:10.5px;color:#000;">AUT</div>
<div class="t" style="left:427.10px;top:506.11px;font:normal 10.5px 'Liberation Sans', sans-serif;line-height:10.5px;color:#000;">040</div>
<div class="t" style="left:480.10px;top:506.11px;font:normal 10.5px 'Liberation Sans', sans-serif;line-height:10.5px;color:#000;">40</div>
<svg style="position:absolute;left:425px;top:502px;" width="5" height="5" viewBox="0 0 5 5"><path d="M0 0 L5 0 L0 5 Z" fill="#008a00"/></svg>
<svg style="position:absolute;left:478px;top:502px;" width="5" height="5" viewBox="0 0 5 5"><path d="M0 0 L5 0 L0 5 Z" fill="#008a00"/></svg>
<div class="t" style="left:6.38px;top:522.69px;font:normal 11px 'Liberation Sans', sans-serif;line-height:11px;color:#222;">17</div>
<div class="t" style="left:26.30px;top:523.11px;font:normal 10.5px 'Liberation Sans', sans-serif;line-height:10.5px;color:#000;">AZERBAIJAN</div>
<div class="t" style="left:320.10px;top:523.11px;font:normal 10.5px 'Liberation Sans', sans-serif;line-height:10.5px;color:#000;">AZ</div>
<div class="t" style="left:379.10px;top:523.11px;font:normal 10.5px 'Liberation Sans', sans-serif;line-height:10.5px;color:#000;">AZE</div>
<div class="t" style="left:427.10px;top:523.11px;font:normal 10.5px 'Liberation Sans', sans-serif;line-height:10.5px;color:#000;">031</div>
<div class="t" style="left:480.10px;top:523.11px;font:normal 10.5px 'Liberation Sans', sans-serif;line-height:10.5px;color:#000;">31</div>
<svg style="position:absolute;left:425px;top:519px;" width="5" height="5" viewBox="0 0 5 5"><path d="M0 0 L5 0 L0 5 Z" fill="#008a00"/></svg>
<svg style="position:absolute;left:478px;top:519px;" width="5" height="5" viewBox="0 0 5 5"><path d="M0 0 L5 0 L0 5 Z" fill="#008a00"/></svg>
<div class="t" style="left:6.38px;top:539.69px;font:normal 11px 'Liberation Sans', sans-serif;line-height:11px;color:#222;">18</div>
<div class="t" style="left:26.30px;top:540.11px;font:normal 10.5px 'Liberation Sans', sans-serif;line-height:10.5px;color:#000;">BAHAMAS</div>
<div class="t" style="left:320.10px;top:540.11px;font:normal 10.5px 'Liberation Sans', sans-serif;line-height:10.5px;color:#000;">BS</div>
<div class="t" style="left:379.10px;top:540.11px;font:normal 10.5px 'Liberation Sans', sans-serif;line-height:10.5px;color:#000;">BHS</div>
<div class="t" style="left:427.10px;top:540.11px;font:normal 10.5px 'Liberation Sans', sans-serif;line-height:10.5px;color:#000;">044</div>
<div class="t" style="left:480.10px;top:540.11px;font:normal 10.5px 'Liberation Sans', sans-serif;line-height:10.5px;color:#000;">44</div>
<svg style="position:absolute;left:425px;top:536px;" width="5" height="5" viewBox="0 0 5 5"><path d="M0 0 L5 0 L0 5 Z" fill="#008a00"/></svg>
<svg style="position:absolute;left:478px;top:536px;" width="5" height="5" viewBox="0 0 5 5"><path d="M0 0 L5 0 L0 5 Z" fill="#008a00"/></svg>
<div class="t" style="left:6.38px;top:556.69px;font:normal 11px 'Liberation Sans', sans-serif;line-height:11px;color:#222;">19</div>
<div class="t" style="left:26.30px;top:557.11px;font:normal 10.5px 'Liberation Sans', sans-serif;line-height:10.5px;color:#000;">BAHRAIN</div>
<div class="t" style="left:320.10px;top:557.11px;font:normal 10.5px 'Liberation Sans', sans-serif;line-height:10.5px;color:#000;">BH</div>
<div class="t" style="left:379.10px;top:557.11px;font:normal 10.5px 'Liberation Sans', sans-serif;line-height:10.5px;color:#000;">BHR</div>
<div class="t" style="left:427.10px;top:557.11px;font:normal 10.5px 'Liberation Sans', sans-serif;line-height:10.5px;color:#000;">048</div>
<div class="t" style="left:480.10px;top:557.11px;font:normal 10.5px 'Liberation Sans', sans-serif;line-height:10.5px;color:#000;">48</div>
<svg style="position:absolute;left:425px;top:553px;" width="5" height="5" viewBox="0 0 5 5"><path d="M0 0 L5 0 L0 5 Z" fill="#008a00"/></svg>
<svg style="position:absolute;left:478px;top:553px;" width="5" height="5" viewBox="0 0 5 5"><path d="M0 0 L5 0 L0 5 Z" fill="#008a00"/></svg>
<div class="t" style="left:6.38px;top:573.69px;font:normal 11px 'Liberation Sans', sans-serif;line-height:11px;color:#222;">20</div>
<div class="t" style="left:26.30px;top:574.11px;font:normal 10.5px 'Liberation Sans', sans-serif;line-height:10.5px;color:#000;">BANGLADESH</div>
<div class="t" style="left:320.10px;top:574.11px;font:normal 10.5px 'Liberation Sans', sans-serif;line-height:10.5px;color:#000;">BD</div>
<div class="t" style="left:379.10px;top:574.11px;font:normal 10.5px 'Liberation Sans', sans-serif;line-height:10.5px;color:#000;">BGD</div>
<div class="t" style="left:427.10px;top:574.11px;font:normal 10.5px 'Liberation Sans', sans-serif;line-height:10.5px;color:#000;">050</div>
<div class="t" style="left:480.10px;top:574.11px;font:normal 10.5px 'Liberation Sans', sans-serif;line-height:10.5px;color:#000;">50</div>
<svg style="position:absolute;left:425px;top:570px;" width="5" height="5" viewBox="0 0 5 5"><path d="M0 0 L5 0 L0 5 Z" fill="#008a00"/></svg>
<svg style="position:absolute;left:478px;top:570px;" width="5" height="5" viewBox="0 0 5 5"><path d="M0 0 L5 0 L0 5 Z" fill="#008a00"/></svg>
<div class="t" style="left:6.38px;top:590.69px;font:normal 11px 'Liberation Sans', sans-serif;line-height:11px;color:#222;">21</div>
<div class="t" style="left:26.30px;top:591.11px;font:normal 10.5px 'Liberation Sans', sans-serif;line-height:10.5px;color:#000;">BARBADOS</div>
<div class="t" style="left:320.10px;top:591.11px;font:normal 10.5px 'Liberation Sans', sans-serif;line-height:10.5px;color:#000;">BB</div>
<div class="t" style="left:379.10px;top:591.11px;font:normal 10.5px 'Liberation Sans', sans-serif;line-height:10.5px;color:#000;">BRB</div>
<div class="t" style="left:427.10px;top:591.11px;font:normal 10.5px 'Liberation Sans', sans-serif;line-height:10.5px;color:#000;">052</div>
<div class="t" style="left:480.10px;top:591.11px;font:normal 10.5px 'Liberation Sans', sans-serif;line-height:10.5px;color:#000;">52</div>
<svg style="position:absolute;left:425px;top:587px;" width="5" height="5" viewBox="0 0 5 5"><path d="M0 0 L5 0 L0 5 Z" fill="#008a00"/></svg>
<svg style="position:absolute;left:478px;top:587px;" width="5" height="5" viewBox="0 0 5 5"><path d="M0 0 L5 0 L0 5 Z" fill="#008a00"/></svg>
<div class="t" style="left:6.38px;top:607.69px;font:normal 11px 'Liberation Sans', sans-serif;line-height:11px;color:#222;">22</div>
<div class="t" style="left:26.30px;top:608.11px;font:normal 10.5px 'Liberation Sans', sans-serif;line-height:10.5px;color:#000;">BELARUS</div>
<div class="t" style="left:320.10px;top:608.11px;font:normal 10.5px 'Liberation Sans', sans-serif;line-height:10.5px;color:#000;">BY</div>
<div class="t" style="left:379.10px;top:608.11px;font:normal 10.5px 'Liberation Sans', sans-serif;line-height:10.5px;color:#000;">BLR</div>
<div class="t" style="left:427.10px;top:608.11px;font:normal 10.5px 'Liberation Sans', sans-serif;line-height:10.5px;color:#000;">112</div>
<div class="t" style="left:480.10px;top:608.11px;font:normal 10.5px 'Liberation Sans', sans-serif;line-height:10.5px;color:#000;">112</div>
<svg style="position:absolute;left:425px;top:604px;" width="5" height="5" viewBox="0 0 5 5"><path d="M0 0 L5 0 L0 5 Z" fill="#008a00"/></svg>
<svg style="position:absolute;left:478px;top:604px;" width="5" height="5" viewBox="0 0 5 5"><path d="M0 0 L5 0 L0 5 Z" fill="#008a00"/></svg>
<div class="t" style="left:6.38px;top:624.69px;font:normal 11px 'Liberation Sans', sans-serif;line-height:11px;color:#222;">23</div>
<div class="t" style="left:26.30px;top:625.11px;font:normal 10.5px 'Liberation Sans', sans-serif;line-height:10.5px;color:#000;">BELGIUM</div>
<div class="t" style="left:320.10px;top:625.11px;font:normal 10.5px 'Liberation Sans', sans-serif;line-height:10.5px;color:#000;">BE</div>
<div class="t" style="left:379.10px;top:625.11px;font:normal 10.5px 'Liberation Sans', sans-serif;line-height:10.5px;color:#000;">BEL</div>
<div class="t" style="left:427.10px;top:625.11px;font:normal 10.5px 'Liberation Sans', sans-serif;line-height:10.5px;color:#000;">056</div>
<div class="t" style="left:480.10px;top:625.11px;font:normal 10.5px 'Liberation Sans', sans-serif;line-height:10.5px;color:#000;">56</div>
<svg style="position:absolute;left:425px;top:621px;" width="5" height="5" viewBox="0 0 5 5"><path d="M0 0 L5 0 L0 5 Z" fill="#008a00"/></svg>
<svg style="position:absolute;left:478px;top:621px;" width="5" height="5" viewBox="0 0 5 5"><path d="M0 0 L5 0 L0 5 Z" fill="#008a00"/></svg>
<div class="t" style="left:6.38px;top:641.69px;font:normal 11px 'Liberation Sans', sans-serif;line-height:11px;color:#222;">24</div>
<div class="t" style="left:26.30px;top:642.11px;font:normal 10.5px 'Liberation Sans', sans-serif;line-height:10.5px;color:#000;">BELIZE</div>
<div class="t" style="left:320.10px;top:642.11px;font:normal 10.5px 'Liberation Sans', sans-serif;line-height:10.5px;color:#000;">BZ</div>
<div class="t" style="left:379.10px;top:642.11px;font:normal 10.5px 'Liberation Sans', sans-serif;line-height:10.5px;color:#000;">BLZ</div>
<div class="t" style="left:427.10px;top:642.11px;font:normal 10.5px 'Liberation Sans', sans-serif;line-height:10.5px;color:#000;">084</div>
<div class="t" style="left:480.10px;top:642.11px;font:normal 10.5px 'Liberation Sans', sans-serif;line-height:10.5px;color:#000;">84</div>
<svg style="position:absolute;left:425px;top:638px;" width="5" height="5" viewBox="0 0 5 5"><path d="M0 0 L5 0 L0 5 Z" fill="#008a00"/></svg>
<svg style="position:absolute;left:478px;top:638px;" width="5" height="5" viewBox="0 0 5 5"><path d="M0 0 L5 0 L0 5 Z" fill="#008a00"/></svg>
<div class="t" style="left:6.38px;top:658.69px;font:normal 11px 'Liberation Sans', sans-serif;line-height:11px;color:#222;">25</div>
<div class="t" style="left:26.30px;top:659.11px;font:normal 10.5px 'Liberation Sans', sans-serif;line-height:10.5px;color:#000;">BENIN</div>
<div class="t" style="left:320.10px;top:659.11px;font:normal 10.5px 'Liberation Sans', sans-serif;line-height:10.5px;color:#000;">BJ</div>
<div class="t" style="left:379.10px;top:659.11px;font:normal 10.5px 'Liberation Sans', sans-serif;line-height:10.5px;color:#000;">BEN</div>
<div class="t" style="left:427.10px;top:659.11px;font:normal 10.5px 'Liberation Sans', sans-serif;line-height:10.5px;color:#000;">204</div>
<div class="t" style="left:480.10px;top:659.11px;font:normal 10.5px 'Liberation Sans', sans-serif;line-height:10.5px;color:#000;">204</div>
<svg style="position:absolute;left:425px;top:655px;" width="5" height="5" viewBox="0 0 5 5"><path d="M0 0 L5 0 L0 5 Z" fill="#008a00"/></svg>
<svg style="position:absolute;left:478px;top:655px;" width="5" height="5" viewBox="0 0 5 5"><path d="M0 0 L5 0 L0 5 Z" fill="#008a00"/></svg>
<div class="t" style="left:6.38px;top:675.69px;font:normal 11px 'Liberation Sans', sans-serif;line-height:11px;color:#222;">26</div>
<div class="t" style="left:26.30px;top:676.11px;font:normal 10.5px 'Liberation Sans', sans-serif;line-height:10.5px;color:#000;">BERMUDA</div>
<div class="t" style="left:320.10px;top:676.11px;font:normal 10.5px 'Liberation Sans', sans-serif;line-height:10.5px;color:#000;">BM</div>
<div class="t" style="left:379.10px;top:676.11px;font:normal 10.5px 'Liberation Sans', sans-serif;line-height:10.5px;color:#000;">BMU</div>
<div class="t" style="left:427.10px;top:676.11px;font:normal 10.5px 'Liberation Sans', sans-serif;line-height:10.5px;color:#000;">060</div>
<div class="t" style="left:480.10px;top:676.11px;font:normal 10.5px 'Liberation Sans', sans-serif;line-height:10.5px;color:#000;">60</div>
<svg style="position:absolute;left:425px;top:672px;" width="5" height="5" viewBox="0 0 5 5"><path d="M0 0 L5 0 L0 5 Z" fill="#008a00"/></svg>
<svg style="position:absolute;left:478px;top:672px;" width="5" height="5" viewBox="0 0 5 5"><path d="M0 0 L5 0 L0 5 Z" fill="#008a00"/></svg>
<div class="t" style="left:6.38px;top:692.69px;font:normal 11px 'Liberation Sans', sans-serif;line-height:11px;color:#222;">27</div>
<div class="t" style="left:26.30px;top:693.11px;font:normal 10.5px 'Liberation Sans', sans-serif;line-height:10.5px;color:#000;">BHUTAN</div>
<div class="t" style="left:320.10px;top:693.11px;font:normal 10.5px 'Liberation Sans', sans-serif;line-height:10.5px;color:#000;">BT</div>
<div class="t" style="left:379.10px;top:693.11px;font:normal 10.5px 'Liberation Sans', sans-serif;line-height:10.5px;color:#000;">BTN</div>
<div class="t" style="left:427.10px;top:693.11px;font:normal 10.5px 'Liberation Sans', sans-serif;line-height:10.5px;color:#000;">064</div>
<div class="t" style="left:480.10px;top:693.11px;font:normal 10.5px 'Liberation Sans', sans-serif;line-height:10.5px;color:#000;">64</div>
<svg style="position:absolute;left:425px;top:689px;" width="5" height="5" viewBox="0 0 5 5"><path d="M0 0 L5 0 L0 5 Z" fill="#008a00"/></svg>
<svg style="position:absolute;left:478px;top:689px;" width="5" height="5" viewBox="0 0 5 5"><path d="M0 0 L5 0 L0 5 Z" fill="#008a00"/></svg>
<div class="t" style="left:6.38px;top:709.69px;font:normal 11px 'Liberation Sans', sans-serif;line-height:11px;color:#222;">28</div>
<div class="t" style="left:26.30px;top:710.11px;font:normal 10.5px 'Liberation Sans', sans-serif;line-height:10.5px;color:#000;">BOLIVIA, PLURINATIONAL STATE OF</div>
<div class="t" style="left:320.10px;top:710.11px;font:normal 10.5px 'Liberation Sans', sans-serif;line-height:10.5px;color:#000;">BO</div>
<div class="t" style="left:379.10px;top:710.11px;font:normal 10.5px 'Liberation Sans', sans-serif;line-height:10.5px;color:#000;">BOL</div>
<div class="t" style="left:427.10px;top:710.11px;font:normal 10.5px 'Liberation Sans', sans-serif;line-height:10.5px;color:#000;">068</div>
<div class="t" style="left:480.10px;top:710.11px;font:normal 10.5px 'Liberation Sans', sans-serif;line-height:10.5px;color:#000;">68</div>
<svg style="position:absolute;left:425px;top:706px;" width="5" height="5" viewBox="0 0 5 5"><path d="M0 0 L5 0 L0 5 Z" fill="#008a00"/></svg>
<svg style="position:absolute;left:478px;top:706px;" width="5" height="5" viewBox="0 0 5 5"><path d="M0 0 L5 0 L0 5 Z" fill="#008a00"/></svg>
<div class="t" style="left:6.38px;top:726.69px;font:normal 11px 'Liberation Sans', sans-serif;line-height:11px;color:#222;">29</div>
<div class="t" style="left:26.30px;top:727.11px;font:normal 10.5px 'Liberation Sans', sans-serif;line-height:10.5px;color:#000;">BONAIRE, SINT EUSTATIUS AND SABA</div>
<div class="t" style="left:320.10px;top:727.11px;font:normal 10.5px 'Liberation Sans', sans-serif;line-height:10.5px;color:#000;">BQ</div>
<div class="t" style="left:379.10px;top:727.11px;font:normal 10.5px 'Liberation Sans', sans-serif;line-height:10.5px;color:#000;">BES</div>
<div class="t" style="left:427.10px;top:727.11px;font:normal 10.5px 'Liberation Sans', sans-serif;line-height:10.5px;color:#000;">535</div>
<div class="t" style="left:480.10px;top:727.11px;font:normal 10.5px 'Liberation Sans', sans-serif;line-height:10.5px;color:#000;">535</div>
<svg style="position:absolute;left:425px;top:723px;" width="5" height="5" viewBox="0 0 5 5"><path d="M0 0 L5 0 L0 5 Z" fill="#008a00"/></svg>
<svg style="position:absolute;left:478px;top:723px;" width="5" height="5" viewBox="0 0 5 5"><path d="M0 0 L5 0 L0 5 Z" fill="#008a00"/></svg>
<div class="t" style="left:6.38px;top:743.69px;font:normal 11px 'Liberation Sans', sans-serif;line-height:11px;color:#222;">30</div>
<div class="t" style="left:26.30px;top:744.11px;font:normal 10.5px 'Liberation Sans', sans-serif;line-height:10.5px;color:#000;">BOSNIA AND HERZEGOVINA</div>
<div class="t" style="left:320.10px;top:744.11px;font:normal 10.5px 'Liberation Sans', sans-serif;line-height:10.5px;color:#000;">BA</div>
<div class="t" style="left:379.10px;top:744.11px;font:normal 10.5px 'Liberation Sans', sans-serif;line-height:10.5px;color:#000;">BIH</div>
<div class="t" style="left:427.10px;top:744.11px;font:normal 10.5px 'Liberation Sans', sans-serif;line-height:10.5px;color:#000;">070</div>
<div class="t" style="left:480.10px;top:744.11px;font:normal 10.5px 'Liberation Sans', sans-serif;line-height:10.5px;color:#000;">70</div>
<svg style="position:absolute;left:425px;top:740px;" width="5" height="5" viewBox="0 0 5 5"><path d="M0 0 L5 0 L0 5 Z" fill="#008a00"/></svg>
<svg style="position:absolute;left:478px;top:740px;" width="5" height="5" viewBox="0 0 5 5"><path d="M0 0 L5 0 L0 5 Z" fill="#008a00"/></svg>
<div class="t" style="left:6.38px;top:760.69px;font:normal 11px 'Liberation Sans', sans-serif;line-height:11px;color:#222;">31</div>
<div class="t" style="left:26.30px;top:761.11px;font:normal 10.5px 'Liberation Sans', sans-serif;line-height:10.5px;color:#000;">BOTSWANA</div>
<div class="t" style="left:320.10px;top:761.11px;font:normal 10.5px 'Liberation Sans', sans-serif;line-height:10.5px;color:#000;">BW</div>
<div class="t" style="left:379.10px;top:761.11px;font:normal 10.5px 'Liberation Sans', sans-serif;line-height:10.5px;color:#000;">BWA</div>
<div class="t" style="left:427.10px;top:761.11px;font:normal 10.5px 'Liberation Sans', sans-serif;line-height:10.5px;color:#000;">072</div>
<div class="t" style="left:480.10px;top:761.11px;font:normal 10.5px 'Liberation Sans', sans-serif;line-height:10.5px;color:#000;">72</div>
<svg style="position:absolute;left:425px;top:757px;" width="5" height="5" viewBox="0 0 5 5"><path d="M0 0 L5 0 L0 5 Z" fill="#008a00"/></svg>
<svg style="position:absolute;left:478px;top:757px;" width="5" height="5" viewBox="0 0 5 5"><path d="M0 0 L5 0 L0 5 Z" fill="#008a00"/></svg>
<div class="t" style="left:166.99px;top:226.11px;font:normal 10.5px 'Liberation Sans', sans-serif;line-height:10.5px;color:#222;">A</div>
<div class="t" style="left:343.49px;top:226.11px;font:normal 10.5px 'Liberation Sans', sans-serif;line-height:10.5px;color:#222;">B</div>
<div class="t" style="left:396.70px;top:226.11px;font:normal 10.5px 'Liberation Sans', sans-serif;line-height:10.5px;color:#222;">C</div>
<div class="t" style="left:447.20px;top:226.11px;font:normal 10.5px 'Liberation Sans', sans-serif;line-height:10.5px;color:#222;">D</div>
<div class="t" style="left:498.99px;top:226.11px;font:normal 10.5px 'Liberation Sans', sans-serif;line-height:10.5px;color:#222;">E</div>
<div class="t" style="left:551.29px;top:226.11px;font:normal 10.5px 'Liberation Sans', sans-serif;line-height:10.5px;color:#222;">F</div>
<div class="t" style="left:632.91px;top:226.11px;font:normal 10.5px 'Liberation Sans', sans-serif;line-height:10.5px;color:#222;">G</div>
<div class="t" style="left:760.20px;top:226.11px;font:bold 10.5px 'Liberation Sans', sans-serif;line-height:10.5px;color:#217346;">H</div>
<div class="t" style="left:861.04px;top:226.11px;font:normal 10.5px 'Liberation Sans', sans-serif;line-height:10.5px;color:#222;">I</div>
<div class="t" style="left:913.88px;top:226.11px;font:normal 10.5px 'Liberation Sans', sans-serif;line-height:10.5px;color:#222;">J</div>
<div class="t" style="left:966.99px;top:226.11px;font:normal 10.5px 'Liberation Sans', sans-serif;line-height:10.5px;color:#222;">K</div>
<div class="t" style="left:1021.58px;top:226.11px;font:normal 10.5px 'Liberation Sans', sans-serif;line-height:10.5px;color:#222;">L</div>
<div class="t" style="left:644.60px;top:260.47px;font:bold 13.5px 'Liberation Sans', sans-serif;line-height:13.5px;color:#000;transform:scaleX(1.0345);">INPUT:</div>
<div class="t" style="left:755.40px;top:260.47px;font:bold 13.5px 'Liberation Sans', sans-serif;line-height:13.5px;color:#000;transform:scaleX(0.9166);">AS</div>
<div class="t" style="left:644.60px;top:332.27px;font:bold 13.5px 'Liberation Sans', sans-serif;line-height:13.5px;color:#000;transform:scaleX(0.9833);">INDEX:</div>
<div class="t" style="left:699.70px;top:332.27px;font:bold 13.5px 'Liberation Sans', sans-serif;line-height:13.5px;color:#000;transform:scaleX(1.0233);">AMERICAN SAMOA</div>
<div style="left:691px;top:326px;width:146px;height:23px;background:transparent;box-sizing:border-box;border:2px solid #217346;"></div>
<div style="left:832px;top:345px;width:5px;height:4px;background:#217346;border:1px solid #fff;"></div>
<svg style="position:absolute;left:16px;top:34px;" width="32" height="34" viewBox="0 0 32 34"><g fill="none" stroke="#595959" stroke-linecap="round"><path d="M17.6 4.3 C17.3 3.1 15.6 2.9 14.7 4.8 C13.5 7.5 12.6 15.5 11.3 21.5 C10.3 26.5 8.6 30.3 6.5 30.2 C5.7 30.1 5.2 29.6 5.3 28.9" stroke-width="2.1"/><path d="M9 11.4 H16.8" stroke-width="1.3" stroke-linecap="butt"/><path d="M16.2 15.6 C17.6 14.6 18.7 15.1 19.6 17.8 L21.5 23.2 C22.1 25 23.2 25.4 25.4 23.3" stroke-width="2.2"/><path d="M26 15.4 C24.2 15 22.3 16.8 20.2 19.8 L17.6 23.4 C16.6 24.8 15.6 25 15 24.4" stroke-width="1.1"/></g><g fill="#595959"><circle cx="17.8" cy="4.6" r="1.3"/><circle cx="5.4" cy="29" r="1.3"/><circle cx="26" cy="15.6" r="1.2"/><circle cx="15.1" cy="24.5" r="1.1"/></g></svg>
<svg style="position:absolute;left:76px;top:34px;" width="34" height="34" viewBox="0 0 34 34"><path d="M5.5 4 L29 4 L29 8.2 L28.1 8.2 Q27.4 6.2 23.9 6.2 L12.8 6.2 L23 16.6 L12.8 27.1 L24.8 27.1 Q27.7 27.1 28.3 25.2 L29 25.2 L29 29.7 L5.5 29.7 L5.5 29 L17.3 16.6 L5.5 4.4 Z" fill="#595959"/></svg>
<svg style="position:absolute;left:134px;top:37px;" width="24" height="28" viewBox="0 0 24 28"><path d="M1.2 0 H24 V28 H2 Q0 28 0 26.5 V1.2 Q0 0 1.2 0 Z" fill="#4a7ebb"/><rect x="4" y="0" width="1.2" height="25" fill="#fff"/><path d="M4 25 H24 V26.7 H1.6 Q2.2 25 4 25 Z" fill="#fff"/><path d="M14.40,4.70 L16.28,9.91 L21.82,10.09 L17.44,13.49 L18.98,18.81 L14.40,15.70 L9.82,18.81 L11.36,13.49 L6.98,10.09 L12.52,9.91 Z" fill="#fff"/></svg>
<svg style="position:absolute;left:185px;top:37px;" width="24" height="28" viewBox="0 0 24 28"><path d="M1.2 0 H24 V28 H2 Q0 28 0 26.5 V1.2 Q0 0 1.2 0 Z" fill="#72a690"/><rect x="4" y="0" width="1.2" height="25" fill="#fff"/><path d="M4 25 H24 V26.7 H1.6 Q2.2 25 4 25 Z" fill="#fff"/><ellipse cx="17.6" cy="7.6" rx="4.4" ry="1.4" fill="#fff"/><ellipse cx="11.6" cy="13.5" rx="4.4" ry="1.4" fill="#fff"/><ellipse cx="17.6" cy="7.6" rx="4.2" ry="1.2" fill="none" stroke="#fff" stroke-width="0.75"/><ellipse cx="17.6" cy="9.6" rx="4.2" ry="1.2" fill="none" stroke="#fff" stroke-width="0.75"/><ellipse cx="17.6" cy="11.6" rx="4.2" ry="1.2" fill="none" stroke="#fff" stroke-width="0.75"/><ellipse cx="17.6" cy="13.6" rx="4.2" ry="1.2" fill="none" stroke="#fff" stroke-width="0.75"/><ellipse cx="11.6" cy="13.5" rx="4.2" ry="1.2" fill="none" stroke="#fff" stroke-width="0.75"/><ellipse cx="11.6" cy="15.5" rx="4.2" ry="1.2" fill="none" stroke="#fff" stroke-width="0.75"/><ellipse cx="11.6" cy="17.5" rx="4.2" ry="1.2" fill="none" stroke="#fff" stroke-width="0.75"/></svg>
<svg style="position:absolute;left:232px;top:37px;" width="24" height="28" viewBox="0 0 24 28"><path d="M1.2 0 H24 V28 H2 Q0 28 0 26.5 V1.2 Q0 0 1.2 0 Z" fill="#9467b8"/><rect x="4" y="0" width="1.2" height="25" fill="#fff"/><path d="M4 25 H24 V26.7 H1.6 Q2.2 25 4 25 Z" fill="#fff"/><path d="M9.4 9.8 C9.4 7.3 11.3 6.1 14.3 6.1 C17.2 6.1 18.7 7.6 18.7 9.6 C18.7 11.6 17.5 12.4 16.2 13.2 C15 14 14.4 14.6 14.4 16.3" fill="none" stroke="#fff" stroke-width="2.6"/><rect x="12.9" y="17.9" width="3" height="3.2" fill="#fff"/></svg>
<svg style="position:absolute;left:275px;top:37px;" width="24" height="28" viewBox="0 0 24 28"><path d="M1.2 0 H24 V28 H2 Q0 28 0 26.5 V1.2 Q0 0 1.2 0 Z" fill="#edc57b"/><rect x="4" y="0" width="1.2" height="25" fill="#fff"/><path d="M4 25 H24 V26.7 H1.6 Q2.2 25 4 25 Z" fill="#fff"/><path d="M6.9 20.1 L12.6 4.8 L14.6 4.8 L20.4 20.1 L18.3 20.1 L16.8 16 L10.4 16 L8.9 20.1 Z M11 14.2 L16.2 14.2 L13.6 7.2 Z" fill="#fff"/></svg>
<svg style="position:absolute;left:317px;top:37px;" width="24" height="28" viewBox="0 0 24 28"><path d="M1.2 0 H24 V28 H2 Q0 28 0 26.5 V1.2 Q0 0 1.2 0 Z" fill="#df643f"/><rect x="4" y="0" width="1.2" height="25" fill="#fff"/><path d="M4 25 H24 V26.7 H1.6 Q2.2 25 4 25 Z" fill="#fff"/><circle cx="10.6" cy="6.4" r="3.4" fill="#fff"/><path d="M10.4 4.6 V7 H12.2" stroke="#df643f" stroke-width="1" fill="none"/><rect x="9.1" y="10.2" width="12.8" height="10.8" fill="#fff"/><rect x="10.2" y="12.2" width="1.8" height="1.8" fill="#df643f"/><rect x="10.2" y="15.3" width="1.8" height="1.8" fill="#df643f"/><rect x="10.2" y="18.1" width="1.8" height="1.8" fill="#df643f"/><rect x="13.3" y="12.2" width="1.8" height="1.8" fill="#df643f"/><rect x="13.3" y="15.3" width="1.8" height="1.8" fill="#df643f"/><rect x="13.3" y="18.1" width="1.8" height="1.8" fill="#df643f"/><rect x="16.1" y="12.2" width="1.8" height="1.8" fill="#df643f"/><rect x="16.1" y="15.3" width="1.8" height="1.8" fill="#df643f"/><rect x="16.1" y="18.1" width="1.8" height="1.8" fill="#df643f"/><rect x="19.2" y="12.2" width="1.8" height="1.8" fill="#df643f"/><rect x="19.2" y="15.3" width="1.8" height="1.8" fill="#df643f"/><rect x="19.2" y="18.1" width="1.8" height="1.8" fill="#df643f"/></svg>
<svg style="position:absolute;left:370px;top:37px;" width="24" height="28" viewBox="0 0 24 28"><path d="M1.2 0 H24 V28 H2 Q0 28 0 26.5 V1.2 Q0 0 1.2 0 Z" fill="#4a7ebb"/><rect x="4" y="0" width="1.2" height="25" fill="#fff"/><path d="M4 25 H24 V26.7 H1.6 Q2.2 25 4 25 Z" fill="#fff"/><circle cx="13.1" cy="10.4" r="4.2" fill="none" stroke="#fff" stroke-width="1.6"/><path d="M16.2 13.8 L20.2 17.9" stroke="#fff" stroke-width="2.2" stroke-linecap="round"/></svg>
<svg style="position:absolute;left:426px;top:37px;" width="24" height="28" viewBox="0 0 24 28"><path d="M1.2 0 H24 V28 H2 Q0 28 0 26.5 V1.2 Q0 0 1.2 0 Z" fill="#72a690"/><rect x="4" y="0" width="1.2" height="25" fill="#fff"/><path d="M4 25 H24 V26.7 H1.6 Q2.2 25 4 25 Z" fill="#fff"/><ellipse cx="13.5" cy="12.6" rx="3.9" ry="6.8" fill="none" stroke="#fff" stroke-width="1.8"/><path d="M10.3 12.6 H16.7" stroke="#fff" stroke-width="1.4"/></svg>
<svg style="position:absolute;left:481px;top:37px;" width="24" height="28" viewBox="0 0 24 28"><path d="M1.2 0 H24 V28 H2 Q0 28 0 26.5 V1.2 Q0 0 1.2 0 Z" fill="#e98a42"/><rect x="4" y="0" width="1.2" height="25" fill="#fff"/><path d="M4 25 H24 V26.7 H1.6 Q2.2 25 4 25 Z" fill="#fff"/><circle cx="9.6" cy="14.5" r="1.35" fill="#fff"/><circle cx="14.7" cy="14.5" r="1.35" fill="#fff"/><circle cx="19.9" cy="14.5" r="1.35" fill="#fff"/></svg>
<svg style="position:absolute;left:542px;top:34px;" width="38" height="32" viewBox="0 0 38 32"><g fill="none" stroke="#777777" stroke-width="1.1"><path d="M9.4 18.5 V14 Q9.4 11.2 12.2 11.2 H21.7 L26.6 16.6 V18.5 Z" fill="#fff"/><path d="M12.9 9.4 H23.7 L28.7 14.5"/><path d="M14.8 7.5 H25.6 L30.7 12.4"/><circle cx="21.5" cy="16.4" r="1"/></g><rect x="5.7" y="19.6" width="20" height="7.2" fill="#fff" stroke="#777777" stroke-width="1.2"/><path d="M27.1 19.5 L31.9 14.2 V21.5 L27.1 26.7 Z" fill="#777777"/><path d="M5.2 17.5 L7.7 15 V17.5 Z" fill="#777777"/></svg>
<svg style="position:absolute;left:589px;top:36px;" width="18" height="13" viewBox="0 0 18 13"><path d="M4.2 1.3 H16.5 V11.3 H4.2 Q3.3 11.3 2.6 10.4 L1.3 7.3 Q1 6.3 1.3 5.4 L2.6 2.2 Q3.3 1.3 4.2 1.3 Z" fill="#fff" stroke="#6a6a6a" stroke-width="1.1"/><circle cx="5.3" cy="6.3" r="1" fill="none" stroke="#6a6a6a" stroke-width="0.9"/><path d="M8.2 5.4 H14.6 M8.2 8.5 H14.6" stroke="#4a7ebb" stroke-width="1.1"/></svg>
<svg style="position:absolute;left:589px;top:58px;" width="18" height="17" viewBox="0 0 18 17"><path d="M5.8 6.6 H4 Q3 6.6 2.4 5.8 L1.4 4.6 Q1 4 1.4 3.3 L2.4 2 Q3 1.3 4 1.3 H13.6 V5" fill="none" stroke="#6a6a6a" stroke-width="1"/><circle cx="4.6" cy="4" r="0.9" fill="#6a6a6a"/><g transform="translate(2.3,1.2) scale(0.5)"><g fill="none" stroke="#555" stroke-linecap="round"><path d="M17.6 4.3 C17.3 3.1 15.6 2.9 14.7 4.8 C13.5 7.5 12.6 15.5 11.3 21.5 C10.3 26.5 8.6 30.3 6.5 30.2 C5.7 30.1 5.2 29.6 5.3 28.9" stroke-width="2.625"/><path d="M9 11.4 H16.8" stroke-width="1.625" stroke-linecap="butt"/><path d="M16.2 15.6 C17.6 14.6 18.7 15.1 19.6 17.8 L21.5 23.2 C22.1 25 23.2 25.4 25.4 23.3" stroke-width="2.75"/><path d="M26 15.4 C24.2 15 22.3 16.8 20.2 19.8 L17.6 23.4 C16.6 24.8 15.6 25 15 24.4" stroke-width="1.375"/></g><g fill="#555"><circle cx="17.8" cy="4.6" r="1.3"/><circle cx="5.4" cy="29" r="1.3"/><circle cx="26" cy="15.6" r="1.2"/><circle cx="15.1" cy="24.5" r="1.1"/></g></g></svg>
<svg style="position:absolute;left:589px;top:81px;" width="17" height="16" viewBox="0 0 17 16"><rect x="2.7" y="6.8" width="11.7" height="8.1" fill="#fff" stroke="#6a6a6a" stroke-width="1"/><rect x="3.2" y="7.3" width="3" height="3.3" fill="#b4c6e7"/><rect x="6.8" y="7.3" width="3" height="3.3" fill="#b4c6e7"/><rect x="3.2" y="11.2" width="3" height="3.2" fill="#b4c6e7"/><rect x="6.8" y="11.2" width="3" height="3.2" fill="#b4c6e7"/><path d="M2.7 10.9 H14.4 M6.5 6.8 V14.9 M10.2 6.8 V14.9" stroke="#8a8a8a" stroke-width="0.7"/><path d="M8.6 1.3 H15.5 V7.4 H8.6 Q7.8 7.4 7.3 6.6 L6.6 5.2 Q6.3 4.4 6.6 3.6 L7.3 2.1 Q7.8 1.3 8.6 1.3 Z" fill="#fff" stroke="#6a6a6a" stroke-width="1"/><circle cx="9.2" cy="4.4" r="0.7" fill="#6a6a6a"/></svg>
<svg style="position:absolute;left:740px;top:33px;" width="20" height="19" viewBox="0 0 20 19"><rect x="2.3" y="2.5" width="4.4" height="3" fill="#fff" stroke="#666" stroke-width="1.1"/><rect x="2.3" y="14.5" width="4.4" height="3" fill="#fff" stroke="#666" stroke-width="1.1"/><rect x="13.2" y="8.6" width="4.6" height="3" fill="#fff" stroke="#666" stroke-width="1.1"/><path d="M5 7.5 V12.5 M2.4 10 H7.6" stroke="#3a72b9" stroke-width="2"/><path d="M8.5 4.5 L11.5 7.3 M11.5 5.2 V7.3 H9.5 M8.5 14.5 L11.5 11.7 M9.5 11.5 H11.5 V13.6" fill="none" stroke="#3a72b9" stroke-width="1.3"/></svg>
<svg style="position:absolute;left:740px;top:56px;" width="20" height="19" viewBox="0 0 20 19"><rect x="2.3" y="8.6" width="4.4" height="3" fill="#fff" stroke="#666" stroke-width="1.1"/><rect x="13.2" y="2.5" width="4.4" height="3" fill="#fff" stroke="#666" stroke-width="1.1"/><rect x="13.2" y="14.5" width="4.4" height="3" fill="#fff" stroke="#666" stroke-width="1.1"/><path d="M15.2 7.5 V12.5 M12.6 10 H17.8" stroke="#3a72b9" stroke-width="2"/><path d="M8.8 7.6 L11.4 5 M9.4 5 H11.4 V7 M8.8 12.4 L11.4 15 M11.4 13 V15 H9.4" fill="none" stroke="#3a72b9" stroke-width="1.3"/></svg>
<svg style="position:absolute;left:740px;top:79px;" width="20" height="20" viewBox="0 0 20 20"><circle cx="3.9" cy="4.1" r="2" fill="#3a72b9"/><path d="M4.2 4.2 V15.3 M2.3 12.3 L4.2 15.3 L6.3 12.3 M4.2 4.2 H13.6 M10.4 2.2 L13.6 4.3 L10.4 6.4 M4.2 4.2 L8.3 8.6" fill="none" stroke="#3a72b9" stroke-width="1.5" stroke-linejoin="round"/><path d="M6.6 10.4 L9.8 8.8 L8.6 11.6 Z" fill="#3a72b9"/><path d="M9.5 17.2 L17.7 10.3 M9.6 10.6 L17.7 17.5" stroke="#e05a2b" stroke-width="1.5"/></svg>
<svg style="position:absolute;left:866px;top:34px;" width="18" height="17" viewBox="0 0 18 17"><path d="M1.4 11.6 V1.4 H15.8 M1.4 11.4 H4.6" fill="none" stroke="#606060" stroke-width="1.1"/><path d="M15.4 4.3 V15.2 H2.3 V14.2" fill="none" stroke="#606060" stroke-width="1.1"/><path d="M2.4 14.8 L15.6 1.4" stroke="#606060" stroke-width="1" stroke-dasharray="1.6 1.1"/><text x="3" y="8.9" font-family="Liberation Sans" font-weight="bold" font-size="7" fill="#555">15</text><text x="9.6" y="13.9" font-family="Liberation Serif" font-style="italic" font-weight="bold" font-size="7" fill="#555">fx</text><circle cx="16" cy="15.7" r="0.9" fill="#555"/></svg>
<svg style="position:absolute;left:866px;top:56px;" width="18" height="18" viewBox="0 0 18 18"><path d="M1.3 5 L3.7 7.4 L8.6 2.3" fill="none" stroke="#3a72b9" stroke-width="1.4"/><path d="M11 5.6 L16.6 11.1 L11 16.6 L5.4 11.1 Z" fill="#eec170" stroke="#eec170" stroke-width="1.6" stroke-linejoin="round"/><rect x="10.1" y="7.4" width="1.6" height="4.8" fill="#e0542b"/><rect x="10.1" y="13.1" width="1.6" height="1.6" fill="#e0542b"/></svg>
<svg style="position:absolute;left:866px;top:80px;" width="18" height="18" viewBox="0 0 18 18"><circle cx="9" cy="8.8" r="7.5" fill="none" stroke="#555" stroke-width="1"/><g transform="translate(1.9,3.8) scale(0.42,0.34)"><g fill="none" stroke="#555" stroke-linecap="round"><path d="M17.6 4.3 C17.3 3.1 15.6 2.9 14.7 4.8 C13.5 7.5 12.6 15.5 11.3 21.5 C10.3 26.5 8.6 30.3 6.5 30.2 C5.7 30.1 5.2 29.6 5.3 28.9" stroke-width="2.7300000000000004"/><path d="M9 11.4 H16.8" stroke-width="1.6900000000000002" stroke-linecap="butt"/><path d="M16.2 15.6 C17.6 14.6 18.7 15.1 19.6 17.8 L21.5 23.2 C22.1 25 23.2 25.4 25.4 23.3" stroke-width="2.8600000000000003"/><path d="M26 15.4 C24.2 15 22.3 16.8 20.2 19.8 L17.6 23.4 C16.6 24.8 15.6 25 15 24.4" stroke-width="1.4300000000000002"/></g><g fill="#555"><circle cx="17.8" cy="4.6" r="1.3"/><circle cx="5.4" cy="29" r="1.3"/><circle cx="26" cy="15.6" r="1.2"/><circle cx="15.1" cy="24.5" r="1.1"/></g></g></svg>
<svg style="position:absolute;left:1004px;top:37px;" width="22" height="32" viewBox="0 0 22 32"><rect x="0.5" y="1" width="30" height="22" fill="#fff" stroke="#777777" stroke-width="1"/><rect x="0.5" y="1" width="30" height="4.5" fill="#777777"/><path d="M3.3 9.2 H7.8 M3.3 12.6 H7.8 M3.3 16 H7.8" stroke="#999" stroke-width="1"/><rect x="10.2" y="8" width="14" height="7.4" fill="#fff" stroke="#999" stroke-width="1"/><path d="M6 19.5 Q2.5 19.5 2.3 22.5 M1.5 22.5 H25" fill="none" stroke="#4a7ebb" stroke-width="1.6"/><rect x="2.2" y="22" width="8.5" height="6.8" rx="3" fill="none" stroke="#4a7ebb" stroke-width="1.6"/><rect x="14" y="22" width="9" height="6.8" rx="3" fill="none" stroke="#4a7ebb" stroke-width="1.6"/></svg>
<svg style="position:absolute;left:311px;top:139px;" width="17" height="16" viewBox="0 0 17 16"><path d="M1.5 1.5 L15.5 14.5 M15.5 1.5 L1.5 14.5" stroke="#a3a3a3" stroke-width="2.3"/></svg>
<svg style="position:absolute;left:346px;top:139px;" width="21" height="17" viewBox="0 0 21 17"><path d="M1.5 9 L7.5 15 L19.5 2" fill="none" stroke="#acacac" stroke-width="3"/></svg>
<svg style="position:absolute;left:376px;top:128px;" width="32" height="34" viewBox="0 0 32 34"><g transform="translate(3.7,6.3) scale(0.75)"><g fill="none" stroke="#4a4a4a" stroke-linecap="round"><path d="M17.6 4.3 C17.3 3.1 15.6 2.9 14.7 4.8 C13.5 7.5 12.6 15.5 11.3 21.5 C10.3 26.5 8.6 30.3 6.5 30.2 C5.7 30.1 5.2 29.6 5.3 28.9" stroke-width="2.8350000000000004"/><path d="M9 11.4 H16.8" stroke-width="1.7550000000000001" stroke-linecap="butt"/><path d="M16.2 15.6 C17.6 14.6 18.7 15.1 19.6 17.8 L21.5 23.2 C22.1 25 23.2 25.4 25.4 23.3" stroke-width="2.9700000000000006"/><path d="M26 15.4 C24.2 15 22.3 16.8 20.2 19.8 L17.6 23.4 C16.6 24.8 15.6 25 15 24.4" stroke-width="1.4850000000000003"/></g><g fill="#4a4a4a"><circle cx="17.8" cy="4.6" r="1.3"/><circle cx="5.4" cy="29" r="1.3"/><circle cx="26" cy="15.6" r="1.2"/><circle cx="15.1" cy="24.5" r="1.1"/></g></g></svg>
<svg style="position:absolute;left:673px;top:483px;" width="20" height="20" viewBox="0 0 20 20"><path d="M5.5 3.5 H10.5 V8 H14.5 V13 H10.5 V16.5 H5.5 V13 H1.5 V8 H5.5 Z" fill="#fff" stroke="#fff" stroke-width="3"/><path d="M5.5 3.5 H10.5 V8 H14.5 V13 H10.5 V16.5 H5.5 V13 H1.5 V8 H5.5 Z" fill="#000" transform="translate(1,1)"/><path d="M5.5 3.5 H10.5 V8 H14.5 V13 H10.5 V16.5 H5.5 V13 H1.5 V8 H5.5 Z" fill="#fff" stroke="#000" stroke-width="1.6"/></svg>
</body></html>
